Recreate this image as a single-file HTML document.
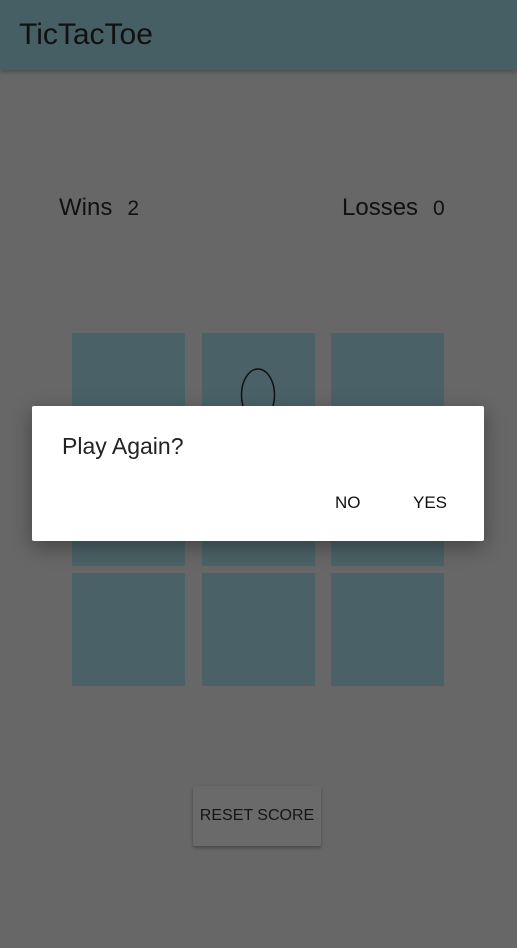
<!DOCTYPE html>
<html><head><style>
html,body{margin:0;padding:0}
body{width:517px;height:948px;background:#676767;position:relative;overflow:hidden;font-family:"Liberation Sans",sans-serif}
.bar{position:absolute;left:0;top:0;width:517px;height:70px;background:#465f64;box-shadow:0 2px 4px rgba(0,0,0,.25)}
.bar span{position:absolute;left:19px;top:18px;font-size:30px;color:#111}
.t{position:absolute;font-size:24px;color:#111;top:194px}
.n{font-size:21px;margin-left:15px}
.c{position:absolute;width:113px;height:113px;background:#4a6267}
.dlg{position:absolute;left:32px;top:406px;width:452px;height:135px;background:#fff;border-radius:2px;box-shadow:0 6px 20px rgba(0,0,0,.35)}
.btn{position:absolute;left:193px;top:786px;width:128px;height:60px;background:#6a6a6a;box-shadow:0 2px 3px rgba(0,0,0,.3);font-size:16px;color:#151515;text-align:center;line-height:60px;border-radius:2px}
</style></head><body>
<div class="bar"><span>TicTacToe</span></div>
<div class="t" style="left:59px">Wins<span class="n">2</span></div>
<div class="t" style="left:342px">Losses<span class="n">0</span></div>
<div class="c" style="left:72px;top:333px"></div>
<div class="c" style="left:202px;top:333px"><svg width="113" height="113" style="position:absolute;left:0;top:0"><ellipse cx="56" cy="62" rx="16.5" ry="26" fill="none" stroke="#111" stroke-width="1.5"/></svg></div>
<div class="c" style="left:331px;top:333px"></div>
<div class="c" style="left:72px;top:453px"></div>
<div class="c" style="left:202px;top:453px"></div>
<div class="c" style="left:331px;top:453px"></div>
<div class="c" style="left:72px;top:573px"></div>
<div class="c" style="left:202px;top:573px"></div>
<div class="c" style="left:331px;top:573px"></div>
<div class="dlg">
<div style="position:absolute;left:30px;top:27px;font-size:23px;color:#222">Play Again?</div>
<div style="position:absolute;left:303px;top:87px;font-size:17px;color:#111">NO</div>
<div style="position:absolute;left:381px;top:87px;font-size:17px;color:#111">YES</div>
</div>
<div class="btn">RESET SCORE</div>
</body></html>
